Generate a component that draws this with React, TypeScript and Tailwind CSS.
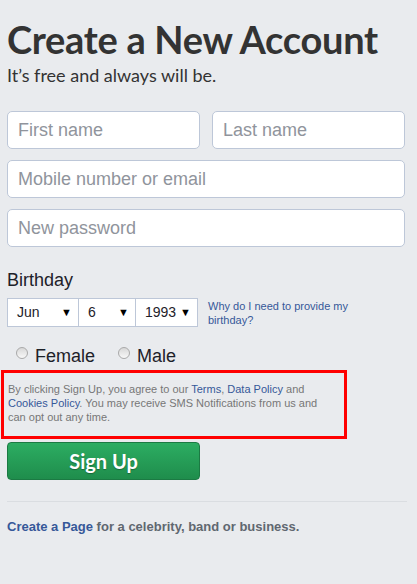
import type { FC } from "react";

const arial = "font-['Liberation_Sans',Arial,sans-serif]";

const Field: FC<{ placeholder: string; className?: string }> = ({
  placeholder,
  className = "",
}) => (
  <input
    type="text"
    placeholder={placeholder}
    className={`h-[38px] rounded-[5px] border border-[#bdc7d8] bg-white px-[10px] text-[18px] text-[#1d2129] placeholder:text-[#90949c] outline-none ${arial} ${className}`}
  />
);

const FakeSelect: FC<{ value: string; width: string; first?: boolean }> = ({
  value,
  width,
  first,
}) => (
  <div
    className={`flex h-[29px] items-center justify-between border border-[#bdc7d8] bg-white pl-[9px] pr-[6px] text-[14px] text-[#1d2129] ${
      first ? "" : "-ml-px"
    } ${width}`}
  >
    <span>{value}</span>
    <span className="text-[11px] text-black">▼</span>
  </div>
);

const Radio: FC<{ label: string }> = ({ label }) => (
  <label className="flex items-center gap-[7px]">
    <span className="mb-[6px] block h-[12px] w-[12px] rounded-full border border-[#a9a9a9] bg-gradient-to-b from-[#d8d8d8] to-[#f8f8f8]" />
    <span className="text-[18px] leading-none text-[#1d2129]">{label}</span>
  </label>
);

export default function App() {
  return (
    <div className={`min-h-[584px] w-[417px] bg-[#e9ebee] ${arial}`}>
      <div className="pl-[7px] pr-[10px] pt-[17px]">
        <h1 className="font-['Lato',sans-serif] text-[38px] font-bold leading-[44px] tracking-[-0.3px] text-[#333]">
          Create a New Account
        </h1>
        <p className="mt-[2px] font-['Lato',sans-serif] text-[18px] leading-[24px] text-[#333]">
          It’s free and always will be.
        </p>

        <div className="mt-[24px] flex w-[398px] flex-col gap-[11px]">
          <div className="flex gap-[12px]">
            <Field placeholder="First name" className="w-[193px]" />
            <Field placeholder="Last name" className="w-[193px]" />
          </div>
          <Field placeholder="Mobile number or email" className="w-[398px]" />
          <Field placeholder="New password" className="w-[398px]" />
        </div>

        <div className="mt-[21px] text-[18px] leading-[24px] text-[#1d2129]">
          Birthday
        </div>
        <div className="mt-[6px] flex items-center">
          <FakeSelect value="Jun" width="w-[72px]" first />
          <FakeSelect value="6" width="w-[58px]" />
          <FakeSelect value="1993" width="w-[63px]" />
          <a className="ml-[10px] w-[150px] text-[11px] leading-[14px] text-[#365899]">
            Why do I need to provide my birthday?
          </a>
        </div>

        <div className="ml-[9px] mt-[20px] flex items-end gap-[23px]">
          <Radio label="Female" />
          <Radio label="Male" />
        </div>
      </div>

      <div className="ml-[1px] mt-[5px] h-[69px] w-[346px] border-[3px] border-[#ff0000] px-[4px] pt-[9px]">
        <p className="w-[318px] text-[11px] leading-[14px] text-[#777]">
          By clicking Sign Up, you agree to our{" "}
          <a className="text-[#365899]">Terms</a>,{" "}
          <a className="text-[#365899]">Data Policy</a> and{" "}
          <a className="text-[#365899]">Cookies Policy</a>. You may receive SMS
          Notifications from us and can opt out any time.
        </p>
      </div>

      <div className="pl-[7px] pr-[10px]">
        <button
          type="button"
          className="mt-[3px] flex h-[38px] w-[193px] items-center justify-center rounded-[4px] border border-[#1b7a43] bg-gradient-to-b from-[#2cad62] to-[#1f8d4c] font-['Lato',sans-serif] text-[20px] font-bold text-white [text-shadow:0_1px_1px_rgba(0,0,0,0.3)]"
        >
          Sign Up
        </button>

        <div className="mt-[21px] h-px w-[400px] bg-[#dadde1]" />

        <p className="mt-[17px] text-[13px] font-bold leading-[16px] text-[#606770]">
          <a className="text-[#365899]">Create a Page</a> for a celebrity, band
          or business.
        </p>
      </div>
    </div>
  );
}
